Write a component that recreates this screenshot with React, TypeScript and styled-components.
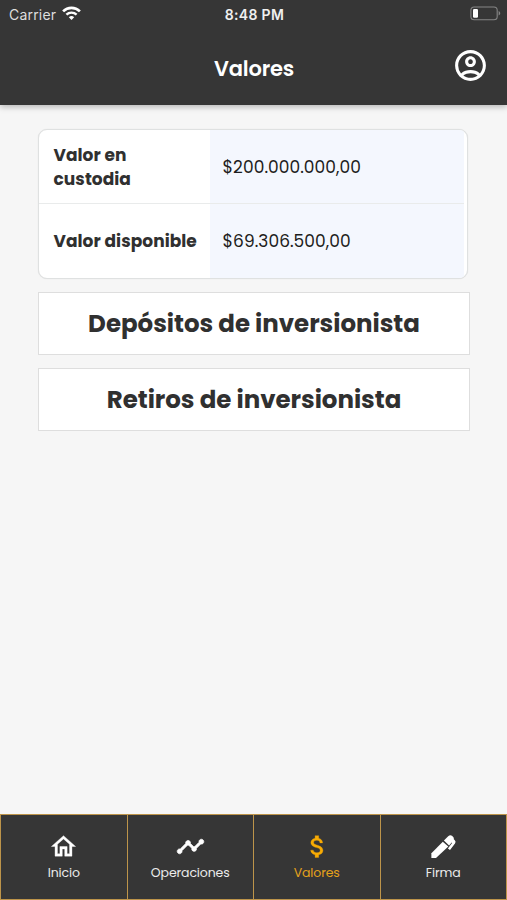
import React from 'react';
import styled, { createGlobalStyle } from 'styled-components';
import { MdOutlineAccountCircle, MdOutlineHome, MdTimeline, MdAttachMoney } from 'react-icons/md';

const GlobalStyle = createGlobalStyle`
  * { box-sizing: border-box; }
  body { margin: 0; font-family: Poppins, Inter, sans-serif; background: #f6f6f6; }
`;

const Screen = styled.div`
  display: flex;
  flex-direction: column;
  width: 507px;
  height: 900px;
  background: #f6f6f6;
  overflow: hidden;
`;

const Top = styled.div`
  height: 105px;
  flex: none;
  background: #363636;
  color: #fff;
  box-shadow: 0 2px 6px rgba(0, 0, 0, 0.26);
`;

const StatusBar = styled.div`
  display: grid;
  grid-template-columns: 1fr auto 1fr;
  align-items: center;
  height: 28px;
  padding: 0 6px 0 9px;
  font-family: Inter, sans-serif;
`;

const Carrier = styled.span`
  display: flex;
  align-items: center;
  gap: 5.5px;
  font-size: 14px;
  letter-spacing: 0.2px;
  color: #dedede;
  svg { margin-top: -2px; }
`;

const Clock = styled.span`
  margin-right: 1px;
  font-size: 14px;
  font-weight: 600;
  letter-spacing: 0.3px;
  color: #f0f0f0;
`;

const BatterySlot = styled.span`
  display: flex;
  justify-content: flex-end;
  padding-bottom: 2px;
`;

const TitleBar = styled.header`
  display: grid;
  grid-template-columns: 1fr auto 1fr;
  align-items: center;
  height: 77px;
  padding: 0 18px 0 19px;
`;

const Title = styled.h1`
  grid-column: 2;
  margin: 4px 0 0;
  font-size: 21px;
  line-height: 30px;
  font-weight: 600;
  letter-spacing: -0.15px;
`;

const Account = styled.span`
  display: flex;
  justify-content: flex-end;
  padding-bottom: 3px;
`;

const Content = styled.main`
  flex: 1;
  display: flex;
  flex-direction: column;
  gap: 13px;
  padding: 24px 37px 0 38px;
`;

const Table = styled.div`
  width: 430px;
  height: 150px;
  display: grid;
  grid-template-rows: 74px 1fr;
  border: 1px solid #dfe1e1;
  border-radius: 9px;
  background: #fff;
  box-shadow: 0 0 1px rgba(0, 0, 0, 0.12);
  overflow: hidden;
`;

const Row = styled.div`
  display: grid;
  grid-template-columns: 171px 1fr;
  margin-right: 3px;
  & + & {
    box-shadow: 0 -1px 0 #e9ebeb;
  }
`;

const Label = styled.div`
  display: flex;
  align-items: center;
  padding: 1px 8px 0 14.5px;
  font-size: 17px;
  line-height: 23.5px;
  font-weight: 700;
  letter-spacing: 0.05px;
  color: #303030;
`;

const Value = styled.div`
  display: flex;
  align-items: center;
  padding-left: 12.5px;
  background: #f4f7fe;
  font-size: 17px;
  letter-spacing: 0.05px;
  color: #1d1d20;
`;

const Action = styled.button`
  width: 432px;
  height: 63px;
  padding: 0;
  border: 1px solid #dedede;
  background: #fff;
  color: #303030;
  font-family: inherit;
  font-size: 24.5px;
  font-weight: 700;
  letter-spacing: -0.03px;
`;

const Tabs = styled.nav`
  display: grid;
  grid-template-columns: 1fr 1fr 1fr 1fr;
  height: 86px;
  flex: none;
  gap: 1px;
  padding: 1px;
  background: #bd944a;
`;

const Tab = styled.div<{ $active?: boolean }>`
  display: flex;
  flex-direction: column;
  align-items: center;
  padding-top: 17px;
  gap: 2px;
  background: #363636;
  color: ${(p) => (p.$active ? '#f8ab04' : '#fff')};
  svg { flex: none; }
  span {
    font-size: 12.5px;
    line-height: 19px;
    letter-spacing: -0.12px;
    color: ${(p) => (p.$active ? '#e5a21b' : '#ececec')};
  }
`;

const HomeIcon = styled(MdOutlineHome)`
  path:not([fill='none']) { stroke: currentColor; stroke-width: 0.3px; }
`;

const TrendIcon = styled(MdTimeline)`
  path:not([fill='none']) { stroke: currentColor; stroke-width: 0.6px; }
`;

const DollarIcon = styled(MdAttachMoney)`
  margin-left: 2px;
  path:not([fill='none']) { stroke: currentColor; stroke-width: 0.25px; }
`;

const Wifi = () => (
  <svg width="19" height="15" viewBox="0 0 19 15" fill="none" stroke="#fff">
    <path d="M1.1 5.4a12 12 0 0 1 16.8 0" strokeWidth="2.7" />
    <path d="M4.4 8.7a7.4 7.4 0 0 1 10.2 0" strokeWidth="2.4" />
    <path d="M6.8 11.3a3.9 3.9 0 0 1 5.4 0L9.5 14z" fill="#fff" stroke="none" />
  </svg>
);

const Battery = () => (
  <svg width="31" height="15" viewBox="0 0 31 15" fill="none">
    <rect x="0.9" y="1" width="26.3" height="12.7" rx="3.3" stroke="#858585" strokeWidth="1.1" />
    <rect x="3" y="3" width="5" height="8.8" rx="1.2" fill="#fff" />
    <path d="M28.6 5.1c2.2 1 2.2 3.6 0 4.5z" fill="#858585" />
  </svg>
);

const Pen = () => (
  <svg width="28" height="29" viewBox="0 0 28 29" fill="#fff">
    <path d="M2.4 26V21.3L13.8 9.7L19.3 14.6L7 26Z" />
    <path d="M14.9 8.6L19.2 4.2Q21.2 2.3 23 3.8L24.4 5.2Q25.4 6.2 24.6 7.1L25.8 8.2Q27.3 9.7 26 11.4L21 18L18.9 16.4L23.1 11L22.7 10.6L20.1 13.4Z" />
  </svg>
);

export default function App() {
  return (
    <>
      <GlobalStyle />
      <Screen>
        <Top>
          <StatusBar>
            <Carrier>Carrier <Wifi /></Carrier>
            <Clock>8:48 PM</Clock>
            <BatterySlot><Battery /></BatterySlot>
          </StatusBar>
          <TitleBar>
            <Title>Valores</Title>
            <Account><MdOutlineAccountCircle size={37} /></Account>
          </TitleBar>
        </Top>
        <Content>
          <Table>
            <Row>
              <Label>Valor en custodia</Label>
              <Value>$200.000.000,00</Value>
            </Row>
            <Row>
              <Label>Valor disponible</Label>
              <Value>$69.306.500,00</Value>
            </Row>
          </Table>
          <Action>Depósitos de inversionista</Action>
          <Action>Retiros de inversionista</Action>
        </Content>
        <Tabs>
          <Tab><HomeIcon size={29} /><span>Inicio</span></Tab>
          <Tab><TrendIcon size={29} /><span>Operaciones</span></Tab>
          <Tab $active><DollarIcon size={29} /><span>Valores</span></Tab>
          <Tab><Pen /><span>Firma</span></Tab>
        </Tabs>
      </Screen>
    </>
  );
}
